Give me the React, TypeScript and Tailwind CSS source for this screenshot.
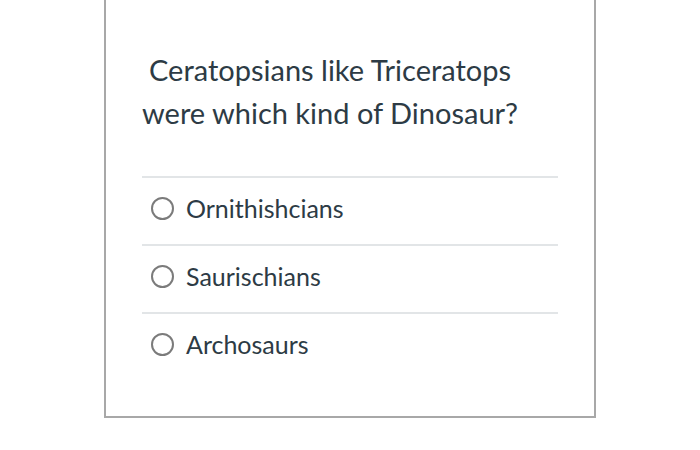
import React from "react";

const options = ["Ornithishcians", "Saurischians", "Archosaurs"];

export default function App() {
  return (
    <div className="w-[700px] h-[450px] bg-white font-['Lato',sans-serif] text-[#2d3b45]">
      {/* Question card, top edge runs off the page */}
      <div className="ml-[104px] w-[492px] h-[418px] border-x-2 border-b-2 border-[#a8a8a8] px-9 pt-[48px]">
        <h2 className="text-[29px] leading-[43px] indent-[7px]">
          Ceratopsians like Triceratops
          <br />
          were which kind of Dinosaur?
        </h2>

        <div className="mt-[42px]">
          {options.map((opt) => (
            <div
              key={opt}
              className="border-t-2 border-[#e2e5e7] h-[68px] pb-[6px] flex items-center gap-3 pl-[9px]"
            >
              <span className="w-[23px] h-[23px] rounded-full border-2 border-[#7b7b7b] shrink-0" />
              <span className="text-[25px] leading-none">{opt}</span>
            </div>
          ))}
        </div>
      </div>
    </div>
  );
}
